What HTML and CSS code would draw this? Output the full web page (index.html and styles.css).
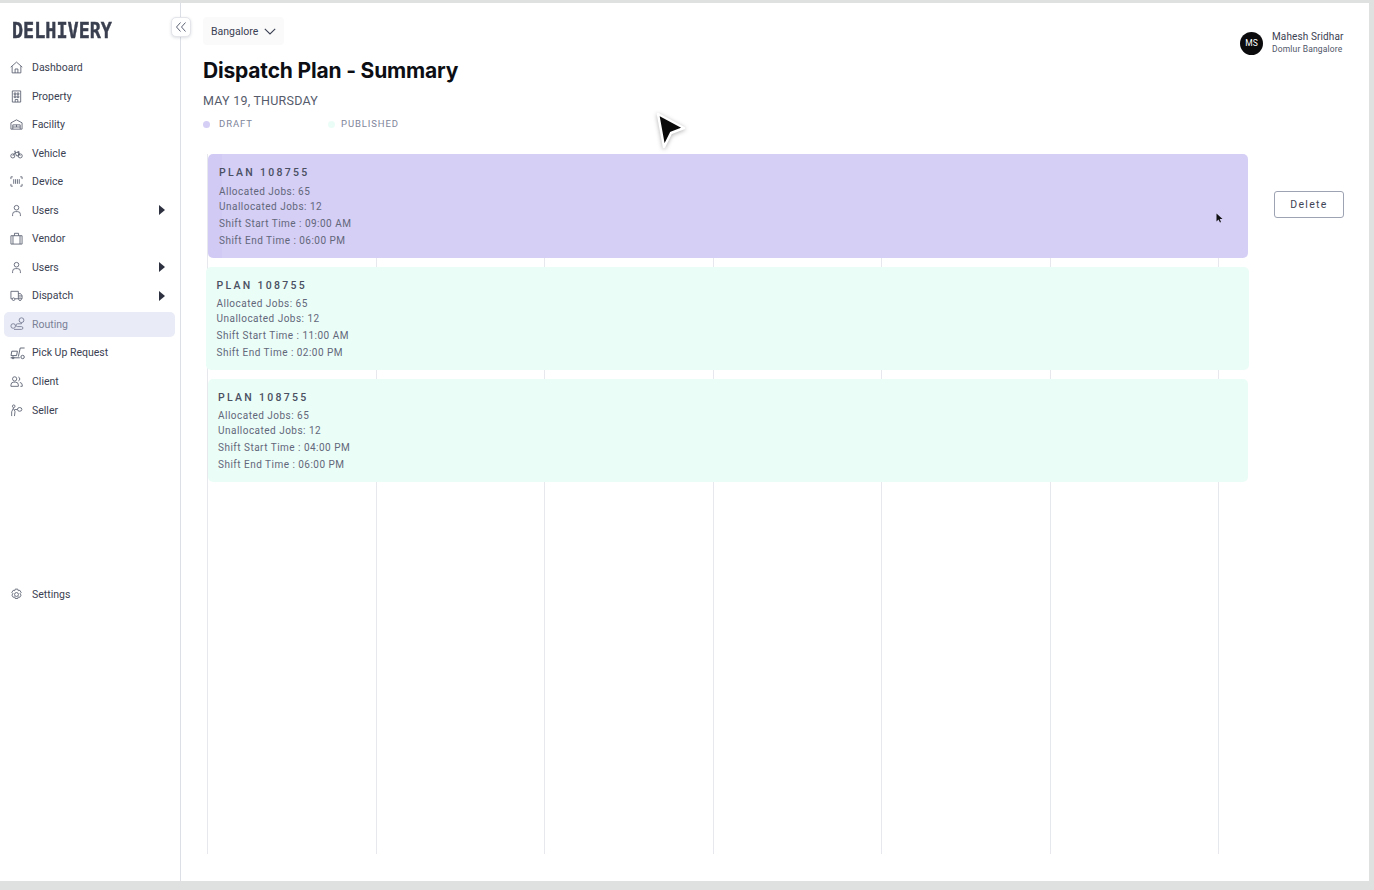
FILE: index.html
```html
<!DOCTYPE html>
<html lang="en">
<head>
<meta charset="utf-8">
<title>Dispatch Plan - Summary</title>
<link rel="stylesheet" href="styles.css">
</head>
<body>
<div class="app">
  <aside class="sidebar">
    <div class="logo">DELHIVERY</div>
    <button class="collapse" aria-label="Collapse"><svg width="12" height="12" viewBox="0 0 12 12"><path d="M5.5 1.5 1.5 6l4 4.5M10.5 1.5 6.5 6l4 4.5"/></svg></button>
    <nav class="nav">
      <a class="item"><svg class="ico" viewBox="0 0 14 14"><path d="M.8 6.6 7 1.2l6.2 5.4M2.3 5.600v7.200h9.400V5.600M5.500 12.800V8.600h3v4.200"/></svg>Dashboard</a>
      <a class="item"><svg class="ico" viewBox="0 0 14 14"><path d="M2.500 1h9v12h-9zM4.500 3.200h1.800V5H4.500zM7.700 3.200h1.800V5H7.700zM4.500 6.400h1.800v1.800H4.500zM7.700 6.400h1.800v1.800H7.700zM5.600 13v-2.800h2.800V13"/></svg>Property</a>
      <a class="item"><svg class="ico" viewBox="0 0 14 14"><path d="M1 5.200 7 2l6 3.200V12H1zM3 12V7.400h8V12M3 9.700h8M7 7.400v2.300"/></svg>Facility</a>
      <a class="item"><svg class="ico" viewBox="0 0 14 14"><circle cx="3" cy="9.600" r="2.200"/><circle cx="11" cy="9.600" r="2.200"/><path d="M3 9.600 5.400 6h4l1.600 3.600M5.400 6l1.800 3.600h1.600l1-4.600H8M4.300 4.600h2"/></svg>Vehicle</a>
      <a class="item"><svg class="ico" viewBox="0 0 14 14"><path d="M3 2H1v2.400M11 2h2v2.400M3 12H1V9.600M11 12h2V9.600M4 4.500v5M6 4.500v5M8 4.500v5M10 4.500v5"/></svg>Device</a>
      <a class="item has-sub"><svg class="ico" viewBox="0 0 14 14"><circle cx="7" cy="4" r="2.500"/><path d="M2.800 13v-1.800A3 3 0 0 1 5.800 8.200h2.400a3 3 0 0 1 3 3V13"/></svg>Users<span class="caret"></span></a>
      <a class="item"><svg class="ico" viewBox="0 0 14 14"><path d="M1 4h12v9H1zM3.200 4v9M10.800 4v9M4.800 4V1.400h4.400V4"/></svg>Vendor</a>
      <a class="item has-sub"><svg class="ico" viewBox="0 0 14 14"><circle cx="7" cy="4" r="2.500"/><path d="M2.800 13v-1.800A3 3 0 0 1 5.800 8.200h2.400a3 3 0 0 1 3 3V13"/></svg>Users<span class="caret"></span></a>
      <a class="item has-sub"><svg class="ico" viewBox="0 0 14 14"><path d="M2.300 10.500H1V2.500h8v8H5.400M9 5h2.400L13 7.200v3.300h-1M9 10.500h.6M9.200 7.500H13"/><circle cx="3.800" cy="11" r="1.400"/><circle cx="10.800" cy="11" r="1.400"/></svg>Dispatch<span class="caret"></span></a>
      <a class="item active"><svg class="ico ico-wide" viewBox="0 0 16 14"><circle cx="11.500" cy="3.200" r="2.400"/><circle cx="3.200" cy="9" r="2.300"/><path d="M11.500 5.600v1.200H7.500a1.400 1.400 0 0 0 0 2.800h4a1.300 1.300 0 0 1 0 2.800H4"/></svg>Routing</a>
      <a class="item"><svg class="ico ico-wide" viewBox="0 0 16 14"><path d="M1.800 5.200h5.600l-.8 4.400H1zM.6 11.800h9.200M10.200 2 8.400 10.600M10.200 2h4.400"/><circle cx="12.600" cy="11" r="1.700"/><circle cx="3" cy="11.800" r="1"/></svg>Pick Up Request</a>
      <a class="item"><svg class="ico" viewBox="0 0 14 14"><circle cx="5" cy="4.200" r="2.300"/><path d="M1 12.200v-1.500a3 3 0 0 1 3-3h2a3 3 0 0 1 3 3v1.500zM9 2.200a2.200 2.200 0 0 1 0 4.200M10.600 8a3 3 0 0 1 2.600 2.800v1.400h-2"/></svg>Client</a>
      <a class="item"><svg class="ico" viewBox="0 0 14 14"><circle cx="4" cy="2.400" r="1.400"/><ellipse cx="10.400" cy="5.800" rx="2.400" ry="2"/><path d="M1.800 13V8.400l1.800-3.800 1.800 3.600-.6 4.800M5 6h3"/></svg>Seller</a>
    </nav>
    <a class="item settings"><svg class="ico" viewBox="0 0 14 14"><circle cx="7" cy="7" r="2.100"/><path d="M5.600 1.200h2.800l.5 1.700 1.700-.4 1.400 2.400-1.200 1.300 1.200 1.400-1.400 2.400-1.700-.4-.5 1.700H5.600l-.5-1.700-1.700.4L2 7.600l1.200-1.400L2 4.900l1.400-2.400 1.700.4z"/></svg>Settings</a>
  </aside>

  <main class="main">
    <header class="head">
      <div class="head-left">
        <button class="city">Bangalore<svg width="12" height="7" viewBox="0 0 12 7"><path d="M.8.8 6 6l5.200-5.200"/></svg></button>
        <h1 class="title">Dispatch Plan - Summary</h1>
        <div class="date">MAY 19, THURSDAY</div>
        <div class="legend">
          <span class="legend-item"><i class="dot dot-draft"></i>DRAFT</span>
          <span class="legend-item"><i class="dot dot-pub"></i>PUBLISHED</span>
        </div>
      </div>
      <div class="user">
        <div class="avatar">MS</div>
        <div class="user-text">
          <div class="user-name">Mahesh Sridhar</div>
          <div class="user-sub">Domlur Bangalore</div>
        </div>
      </div>
    </header>

    <section class="body">
      <div class="board">
        <div class="lines"><i></i><i></i><i></i><i></i><i></i><i></i><i></i></div>
        <article class="card card-draft">
          <h2>PLAN 108755</h2>
          <p>Allocated Jobs: 65</p>
          <p class="tight">Unallocated Jobs: 12</p>
          <p>Shift Start Time : 09:00 AM</p>
          <p>Shift End Time : 06:00 PM</p>
        </article>
        <article class="card card-pub card-b">
          <h2>PLAN 108755</h2>
          <p>Allocated Jobs: 65</p>
          <p class="tight">Unallocated Jobs: 12</p>
          <p>Shift Start Time : 11:00 AM</p>
          <p>Shift End Time : 02:00 PM</p>
        </article>
        <article class="card card-pub card-c">
          <h2>PLAN 108755</h2>
          <p>Allocated Jobs: 65</p>
          <p class="tight">Unallocated Jobs: 12</p>
          <p>Shift Start Time : 04:00 PM</p>
          <p>Shift End Time : 06:00 PM</p>
        </article>
      </div>
      <div class="actions"><button class="delete">Delete</button></div>
    </section>
  </main>

  <svg class="cursor-big" width="32" height="38" viewBox="0 0 32 38"><path d="M3 2 29 16 16 21 9 35z"/></svg>
  <svg class="cursor-small" width="7" height="10" viewBox="0 0 7 10"><path d="M.5.5v8l2-2 1.500 3 1-.5-1.300-3H6.500z"/></svg>
</div>
</body>
</html>
```
FILE: styles.css
```css
* { box-sizing: border-box; }
html, body { margin: 0; height: 890px; overflow: hidden; }
body {
  background: #dfe1e0;
  padding: 3px 5px 9px 0;
  font-family: Roboto, "Noto Sans", sans-serif;
  color: #3b4152;
}
.app { position: relative; display: flex; height: 878px; background: #fff; }

/* Sidebar */
.sidebar {
  width: 181px;
  flex: none;
  display: flex;
  flex-direction: column;
  border-right: 1px solid #dcdfe6;
  padding: 0 5px 0 4px;
}
.logo {
  height: 17px;
  margin: 20px 0 15px 8px;
  font-family: "DejaVu Sans Mono", monospace;
  font-weight: 700;
  font-size: 20.500px;
  line-height: 17px;
  -webkit-text-stroke: .4px #3a3f4f;
  color: #3a3f4f;
  transform-origin: left center;
  transform: scaleX(.9);
  white-space: nowrap;
}
.collapse {
  position: absolute;
  left: 171px;
  top: 14px;
  width: 20px;
  height: 20px;
  padding: 0;
  display: flex;
  align-items: center;
  justify-content: center;
  background: #fff;
  border: 1px solid #e3e5ea;
  border-radius: 5px;
  box-shadow: 0 1px 3px rgba(60, 70, 90, .18);
}
.collapse path { fill: none; stroke: #5d6375; stroke-width: 1; }
.nav { display: flex; flex-direction: column; }
.item {
  display: flex;
  align-items: center;
  height: 25px;
  margin-bottom: 3.550px;
  padding-left: 6px;
  border-radius: 5px;
  font-size: 10.500px;
  color: #3b4152;
}
.ico {
  width: 13px;
  height: 13px;
  flex: none;
  margin-right: 9px;
  fill: none;
  stroke: #555b6c;
  stroke-width: .9;
}
.ico-wide { width: 16px; height: 14px; margin: 0 6px 0 0; }
.item .caret {
  margin-left: auto;
  margin-right: 10px;
  width: 0;
  height: 0;
  border-left: 6px solid #2e3240;
  border-top: 5px solid transparent;
  border-bottom: 5px solid transparent;
}
.active { background: #e9ecf6; color: #7a7f97; }
.active .ico { stroke: #7a7f97; }
.settings { margin-top: 156px; }

/* Main */
.main { flex: 1; min-width: 0; display: flex; flex-direction: column; padding: 14px 25px 0 22px; }
.head { display: flex; justify-content: space-between; align-items: flex-start; height: 137px; }
.head-left { display: flex; flex-direction: column; align-items: flex-start; }
.city {
  display: flex;
  align-items: center;
  gap: 6px;
  width: 81px;
  height: 28px;
  padding: 0 0 0 8px;
  border: 0;
  border-radius: 4px;
  background: #fafafb;
  font: 400 10.500px Roboto, sans-serif;
  color: #3b4152;
}
.city path { fill: none; stroke: #3b4152; stroke-width: 1.100; }
.title {
  margin: 12px 0 0;
  font-family: Inter, sans-serif;
  font-size: 21px;
  line-height: 28px;
  font-weight: 700;
  letter-spacing: -.18px;
  color: #0c0e14;
}
.date { margin-top: 8px; font-size: 12.500px; line-height: 15px; color: #565b6c; letter-spacing: .23px; }
.legend { display: flex; margin-top: 9px; font-size: 9.500px; line-height: 14px; letter-spacing: .9px; color: #80859a; }
.legend-item { display: flex; align-items: center; width: 125px; }
.dot { width: 7px; height: 7px; margin-right: 9px; border-radius: 50%; }
.dot-draft { background: #d5cef5; }
.dot-pub { background: #ebfdf7; margin-right: 6px; }
.user { display: flex; align-items: center; margin-top: 13px; gap: 9px; }
.avatar {
  width: 23px;
  height: 23px;
  border-radius: 50%;
  background: #0b0b0d;
  color: #fff;
  font-size: 8.500px;
  line-height: 23px;
  text-align: center;
}
.user-text { width: 72px; }
.user-name { font-size: 10px; line-height: 13px; letter-spacing: .12px; color: #3b4152; white-space: nowrap; }
.user-sub { font-size: 8.500px; line-height: 13px; letter-spacing: .16px; color: #4f5568; white-space: nowrap; }

/* Board */
.body { display: flex; flex: 1; min-height: 0; }
.board { position: relative; width: 1047px; height: 700px; }
.lines {
  position: absolute;
  inset: 0 auto 0 4px;
  display: flex;
  width: 1012px;
}
.lines i { flex: 0 0 168.500px; border-left: 1px solid #e6e8ed; }
.card {
  position: relative;
  width: 1040px;
  height: 104px;
  margin-bottom: 9px;
  padding: 12px 0 0 11px;
  border-radius: 5px;
}
.card h2 { margin: 0 0 3px; font-size: 10.500px; line-height: 14px; font-weight: 500; letter-spacing: 2.300px; color: #4a5062; }
.card p { margin: 0; height: 17px; font-size: 10px; line-height: 17px; color: #62677a; letter-spacing: .48px; }
.card .tight { height: 15px; margin-top: -1px; margin-bottom: 1px; line-height: 15px; }
.card-draft { margin-left: 5px; background: linear-gradient(90deg, #d1caf4 0, #d1caf4 14px, #d5cef5 14px); }
.card-pub { background: #ebfdf7; }
.card-pub h2 { margin-bottom: 2px; }
.card-b { width: 1043px; margin-left: 3px; height: 103px; padding-left: 10.500px; }
.card-c { margin-left: 5px; height: 103px; padding-left: 10px; }

.actions { padding: 37px 0 0 24px; }
.delete {
  width: 70px;
  height: 27px;
  padding: 0;
  background: #fff;
  border: 1px solid #9ea3b3;
  border-radius: 3px;
  font: 400 10.500px Roboto, sans-serif;
  letter-spacing: 1.300px;
  color: #3f4556;
}

/* Overlaid pointers from the recording */
.cursor-big { position: absolute; left: 655px; top: 109px; filter: drop-shadow(0 1px 2px rgba(0, 0, 0, .3)); }
.cursor-big path { fill: #0a0a0a; stroke: #fff; stroke-width: 2.500; stroke-linejoin: round; }
.cursor-small { position: absolute; left: 1216px; top: 210px; }
.cursor-small path { fill: #111; }
```
